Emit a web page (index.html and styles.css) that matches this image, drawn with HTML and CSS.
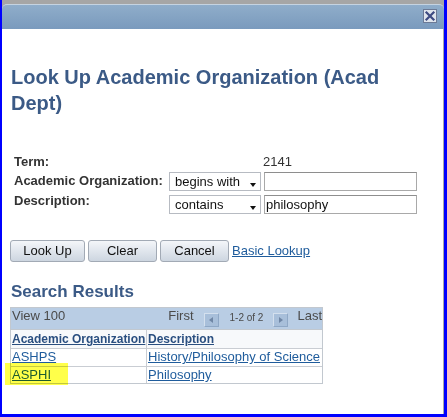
FILE: index.html
```html
<!DOCTYPE html>
<html>
<head>
<meta charset="utf-8">
<link rel="stylesheet" href="styles.css">
</head>
<body>
<div class="window">
  <div class="titlebar">
    <span class="close">
      <svg width="14" height="14" viewBox="0 0 14 14">
        <rect x="0.5" y="0.5" width="13" height="13" fill="#dfe5ed" stroke="#6c7a96"/>
        <path d="M3.5 3.5 L10.5 10.5 M10.5 3.5 L3.5 10.5" stroke="#3d4a82" stroke-width="2.2" stroke-linecap="square"/>
      </svg>
    </span>
  </div>
  <div class="content">
    <h1 class="page-title">Look Up Academic Organization (Acad Dept)</h1>

    <div class="criteria">
      <div class="crit-row term-row">
        <div class="lbl">Term:</div>
        <div class="spacer"></div>
        <div class="val">2141</div>
      </div>
      <div class="crit-row org-row">
        <div class="lbl">Academic Organization:</div>
        <div class="sel">begins with<span class="caret"></span></div>
        <div class="inp"></div>
      </div>
      <div class="crit-row desc-row">
        <div class="lbl">Description:</div>
        <div class="sel">contains<span class="caret"></span></div>
        <div class="inp">philosophy</div>
      </div>
    </div>

    <div class="actions">
      <span class="btn btn-wide">Look Up</span>
      <span class="btn">Clear</span>
      <span class="btn">Cancel</span>
      <a class="link basic" href="#">Basic Lookup</a>
    </div>

    <h2 class="section-title">Search Results</h2>

    <div class="grid">
      <div class="nav">
        <span class="view">View 100</span>
        <span class="nav-right">
          <span class="first">First</span>
          <span class="arrow-btn"><span class="tri tri-left"></span></span>
          <span class="count">1-2 of 2</span>
          <span class="arrow-btn"><span class="tri tri-right"></span></span>
          <span class="last">Last</span>
        </span>
      </div>
      <div class="row head">
        <div class="cell"><a class="hlink" href="#">Academic Organization</a></div>
        <div class="cell c2"><a class="hlink" href="#">Description</a></div>
      </div>
      <div class="row">
        <div class="cell"><a class="link" href="#">ASHPS</a></div>
        <div class="cell c2"><a class="link" href="#">History/Philosophy of Science</a></div>
      </div>
      <div class="row last-row">
        <div class="cell"><a class="link" href="#">ASPHI</a></div>
        <div class="cell c2"><a class="link" href="#">Philosophy</a></div>
      </div>
    </div>

    <div class="highlight"></div>
  </div>
</div>
</body>
</html>
```
FILE: styles.css
```css
html, body {
  margin: 0;
  padding: 0;
}
body {
  background: #0000ff;
  width: 447px;
  height: 417px;
  overflow: hidden;
  font-family: "Liberation Sans", Arial, sans-serif;
  font-size: 13px;
  color: #333;
}
.window {
  margin: 0 3px 3px 2px;
  height: 414px;
  box-sizing: border-box;
  background: #a6a6a6;
  padding-top: 4px;
  display: flex;
  flex-direction: column;
}
.titlebar {
  height: 25px;
  box-sizing: border-box;
  border-radius: 5px 5px 0 0;
  border-top: 1px solid #c5d3e1;
  background: linear-gradient(#8fadca, #7a9abd);
  display: flex;
  justify-content: flex-end;
  align-items: flex-start;
  padding: 4px 7px 0 0;
}
.close {
  display: block;
  width: 14px;
  height: 14px;
}
.close svg { display: block; }
.content {
  flex: 1;
  position: relative;
  background: #fff;
  border-right: 1px solid #a8a8a8;
  padding: 35px 20px 0 9px;
}
.page-title {
  margin: 0;
  font-size: 20px;
  line-height: 26px;
  font-weight: bold;
  color: #3b5a86;
}
.criteria {
  margin: 36px 0 0 3px;
}
.crit-row {
  display: flex;
  gap: 3px;
  height: 19px;
}
.org-row { margin-top: 1px; }
.desc-row { margin-top: 4px; }
.lbl {
  flex: 0 0 152px;
  width: 152px;
  white-space: nowrap;
  font-weight: bold;
  font-size: 13px;
  line-height: 15px;
  color: #333;
}
.term-row .lbl { line-height: 19px; }
.org-row .lbl { margin-top: 1px; }
.desc-row .lbl { margin-top: -2px; }
.spacer { flex: 0 0 92px; }
.val {
  line-height: 19px;
  margin-left: -1px;
}
.sel {
  position: relative;
  flex: 0 0 92px;
  height: 19px;
  box-sizing: border-box;
  border: 1px solid #b7bbc2;
  background: #fff;
  padding-left: 5px;
  line-height: 17px;
  color: #111;
  white-space: nowrap;
}
.caret {
  position: absolute;
  right: 4px;
  top: 10px;
  width: 0;
  height: 0;
  border-left: 3.5px solid transparent;
  border-right: 3.5px solid transparent;
  border-top: 4px solid #111;
}
.inp {
  flex: 0 0 153px;
  height: 19px;
  box-sizing: border-box;
  border: 1px solid #a9a9a9;
  border-top-color: #8e8e8e;
  padding-left: 1px;
  line-height: 17px;
  color: #111;
}
.actions {
  display: flex;
  gap: 3px;
  margin: 26px 0 0 -1px;
  align-items: center;
}
.btn {
  width: 69px;
  height: 22px;
  box-sizing: border-box;
  border: 1px solid #a2aab5;
  border-radius: 3px;
  background: linear-gradient(#f4f6f9, #e2e7ee 45%, #cdd6e0);
  text-align: center;
  line-height: 20px;
  color: #111;
}
.btn-wide { width: 75px; }
.link {
  color: #1f5c9c;
  text-decoration: underline;
}
.basic { line-height: 20px; }
.section-title {
  margin: 19px 0 0;
  font-size: 17px;
  line-height: 21px;
  font-weight: bold;
  color: #3b5a86;
}
.grid {
  width: 313px;
  box-sizing: border-box;
  margin: 5px 0 0 -1px;
  border: 1px solid #c2c8cf;
}
.nav {
  height: 22px;
  box-sizing: border-box;
  border-bottom: 1px solid #c2c8cf;
  background: #b9cde4;
  display: flex;
  justify-content: space-between;
  align-items: flex-start;
  padding-left: 1px;
  line-height: 16px;
  color: #4a4a4a;
}
.nav-right {
  display: flex;
  align-items: flex-start;
}
.arrow-btn {
  width: 15px;
  height: 14px;
  box-sizing: border-box;
  margin-top: 5px;
  background: #a8bfda;
  border: 1px solid;
  border-color: #d4e0ee #8fa8c6 #8fa8c6 #d4e0ee;
  display: flex;
  align-items: center;
  justify-content: center;
}
.first + .arrow-btn { margin-left: 10px; }
.count {
  font-size: 10px;
  margin: 2px 10px 0 11px;
  line-height: 16px;
}
.last { margin-left: 9px; }
.tri {
  width: 0;
  height: 0;
  border-top: 3.5px solid transparent;
  border-bottom: 3.5px solid transparent;
}
.tri-left { border-right: 4px solid #6f86a5; }
.tri-right { border-left: 4px solid #6f86a5; }
.row {
  display: grid;
  grid-template-columns: 135px 1fr;
  border-bottom: 1px solid #c9cdd3;
  height: 17px;
}
.row.head {
  height: 18px;
  background: #f7f9fb;
}
.row.last-row {
  border-bottom: none;
  height: 16px;
}
.cell {
  padding-left: 1px;
  line-height: 16px;
  white-space: nowrap;
  overflow: hidden;
}
.head .cell { line-height: 17px; }
.c2 { border-left: 1px solid #c9cdd3; }
.hlink {
  font-size: 12px;
  font-weight: bold;
  color: #2a4f80;
  text-decoration: underline;
}
.highlight {
  position: absolute;
  left: 3px;
  top: 334px;
  width: 63px;
  height: 22px;
  background: #ffff4a;
  mix-blend-mode: multiply;
}
```
